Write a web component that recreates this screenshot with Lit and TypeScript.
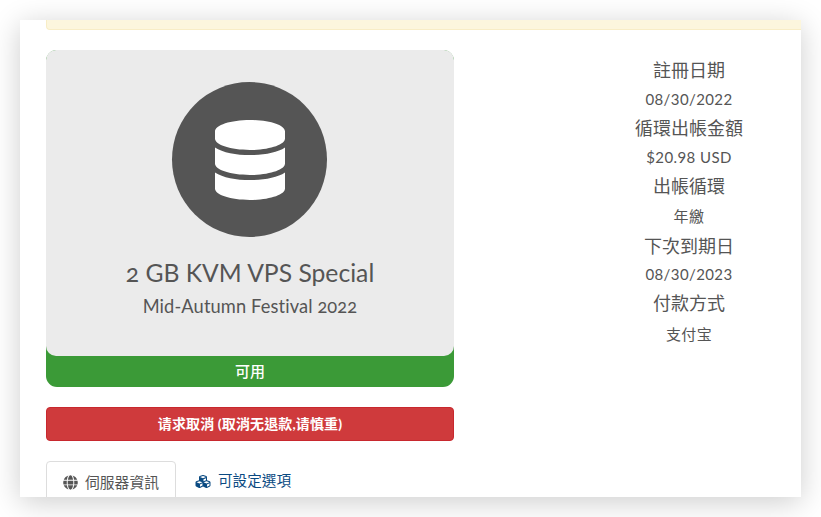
import { LitElement, html, css, svg } from 'lit';
import { customElement } from 'lit/decorators.js';

const DB_PATH = "M448 73.143v45.714C448 159.143 347.667 192 224 192S0 159.143 0 118.857V73.143C0 32.857 100.333 0 224 0s224 32.857 224 73.143zM448 176v102.857C448 319.143 347.667 352 224 352S0 319.143 0 278.857V176c48.125 33.143 136.208 48.572 224 48.572S399.874 209.143 448 176zm0 160v102.857C448 479.143 347.667 512 224 512S0 479.143 0 438.857V336c48.125 33.143 136.208 48.572 224 48.572S399.874 369.143 448 336z";
const GLOBE_PATH = "M336.5 160C322 70.7 287.8 8 248 8s-74 62.7-88.5 152h177zM152 256c0 22.2 1.2 43.5 3.3 64h185.3c2.1-20.5 3.3-41.8 3.3-64s-1.2-43.5-3.3-64H155.3c-2.1 20.5-3.3 41.8-3.3 64zm324.7-96c-28.6-67.9-86.5-120.4-158-141.6 24.4 33.8 41.2 84.7 50 141.6h108zM177.2 18.4C105.8 39.6 47.8 92.1 19.3 160h108c8.7-56.9 25.5-107.8 49.9-141.6zM487.4 192H372.7c2.1 21 3.3 42.5 3.3 64s-1.2 43-3.3 64h114.6c5.5-20.5 8.6-41.8 8.6-64s-3.1-43.5-8.5-64zM120 256c0-21.5 1.2-43 3.3-64H8.6C3.2 212.5 0 233.8 0 256s3.2 43.5 8.6 64h114.6c-2-21-3.2-42.5-3.2-64zm39.5 96c14.5 89.3 48.7 152 88.5 152s74-62.7 88.5-152h-177zm159.3 141.6c71.4-21.2 129.4-73.7 158-141.6h-108c-8.8 56.9-25.6 107.8-50 141.6zM19.3 352c28.6 67.9 86.5 120.4 158 141.6-24.4-33.8-41.2-84.7-50-141.6h-108z";
const CUBES_PATH = "M488.6 250.2L392 214V105.5c0-15-9.3-28.4-23.4-33.7l-100-37.5c-8.1-3.1-17.1-3.1-25.3 0l-100 37.5c-14.1 5.3-23.4 18.7-23.4 33.7V214l-96.6 36.2C9.3 255.5 0 268.9 0 283.9V394c0 13.6 7.7 26.1 19.9 32.2l100 50c10.1 5.1 22.1 5.1 32.2 0l103.9-52 103.9 52c10.1 5.1 22.1 5.1 32.2 0l100-50c12.2-6.1 19.9-18.6 19.9-32.2V283.9c0-15-9.3-28.4-23.4-33.7zM358 214.8l-85 31.9v-68.2l85-37v73.3zM154 104.1l102-38.2 102 38.2v.6l-102 41.4-102-41.4v-.6zm84 291.1l-85 42.5v-79.1l85-38.8v75.4zm0-112l-102 41.4-102-41.4v-.6l102-38.2 102 38.2v.6zm240 112l-85 42.5v-79.1l85-38.8v75.4zm0-112l-102 41.4-102-41.4v-.6l102-38.2 102 38.2v.6z";

const icon = (d: string, vb: string, cls: string) =>
  html`<svg class=${cls} viewBox=${vb} aria-hidden="true">${svg`<path fill="currentColor" d=${d}></path>`}</svg>`;

const INFO = [
  ["註冊日期", "08/30/2022"],
  ["循環出帳金額", "$20.98 USD"],
  ["出帳循環", "年繳"],
  ["下次到期日", "08/30/2023"],
  ["付款方式", "支付宝"],
];

@customElement('app-root')
export class AppRoot extends LitElement {
  static styles = css`
    :host{
      display:block; box-sizing:border-box;
      width:821px; height:517px; padding:20px;
      background:#fff; overflow:hidden;
      font-family:"Lato", "Noto Sans CJK TC", sans-serif;
      color:#555;
    }
    .card{
      height:477px; background:#fff; overflow:hidden;
      box-shadow:0 5px 28px rgba(0,0,0,.2);
      padding-left:26px;
    }
    .alert{
      height:9px;
      background:#fcf6dd; border:1px solid #f8edc6; border-width:0 0 1px 1px;
      border-radius:0 0 0 4px;
    }
    .columns{ display:grid; grid-template-columns:408px 1fr; margin-top:20px; }
    .product{ background:#3b9a37; border-radius:11px; text-align:center; }
    .panel{
      height:306px; box-sizing:border-box; padding-top:32px;
      background:#ebebeb; border-radius:10px;
    }
    .circle{
      width:155px; height:155px; border-radius:50%; margin:0 0 0 126px;
      background:#555; color:#fff;
      display:flex; align-items:center; justify-content:center;
    }
    .db{ width:70px; height:80px; display:block; }
    .panel h3{ margin:21px 0 0; font-size:24.7px; line-height:30px; font-weight:400; font-variant-numeric:oldstyle-nums; }
    .panel h4{ margin:8px 0 0; font-size:18.25px; line-height:20px; font-weight:400; letter-spacing:.12px; font-variant-numeric:oldstyle-nums; }
    .status{ height:31px; line-height:30px; font-size:15px; font-weight:500; color:#fff; }
    .cancel{
      margin-top:20px; height:34px; box-sizing:border-box;
      background:#cf3a3c; border:1px solid #c8282e; border-radius:4px;
      color:#fff; font-size:14px; font-weight:700; line-height:32px; text-align:center;
      letter-spacing:.12px;
    }
    .tabs{ display:flex; margin-top:20px; font-size:14.8px; line-height:22px; }
    .tab{
      display:flex; align-items:flex-start; gap:7px;
      height:46px; box-sizing:border-box; padding:9px 16px 0;
    }
    .tab.active{ border:1px solid #ddd; border-radius:4px 4px 0 0; }
    .tab.link{ color:#0a4a82; padding-left:19px; font-size:14.6px; }
    .ic{ width:15px; height:15px; margin-top:4px; flex:none; }
    .ic.cubes{ width:16px; }
    .info{ padding:0 0 0 123px; text-align:center; }
    .row b{ display:block; font-weight:400; font-size:18px; line-height:28px; padding-top:6px; }
    .row span{ display:block; font-size:15px; line-height:20px; margin-top:5px; letter-spacing:.4px; }
    .row + .row b{ padding-top:5px; }
    .row:nth-child(3) span{ margin-top:6px; margin-bottom:1px; }
    .row:nth-child(4) span{ margin-top:4px; }
    .row:nth-child(5) span{ margin-top:7px; }
  `;

  render(){
    return html`
      <div class="card">
        <div class="alert"></div>
        <div class="columns">
          <div>
            <div class="product">
              <div class="panel">
                <div class="circle">${icon(DB_PATH, "0 0 448 512", "db")}</div>
                <h3>2 GB KVM VPS Special</h3>
                <h4>Mid-Autumn Festival 2022</h4>
              </div>
              <div class="status">可用</div>
            </div>
            <div class="cancel">请求取消 (取消无退款,请慎重)</div>
            <div class="tabs">
              <div class="tab active">${icon(GLOBE_PATH, "0 0 496 512", "ic")}伺服器資訊</div>
              <div class="tab link">${icon(CUBES_PATH, "0 0 512 512", "ic cubes")}可設定選項</div>
            </div>
          </div>
          <div class="info">
            ${INFO.map(([k, v]) => html`<div class="row"><b>${k}</b><span>${v}</span></div>`)}
          </div>
        </div>
      </div>
    `;
  }
}
